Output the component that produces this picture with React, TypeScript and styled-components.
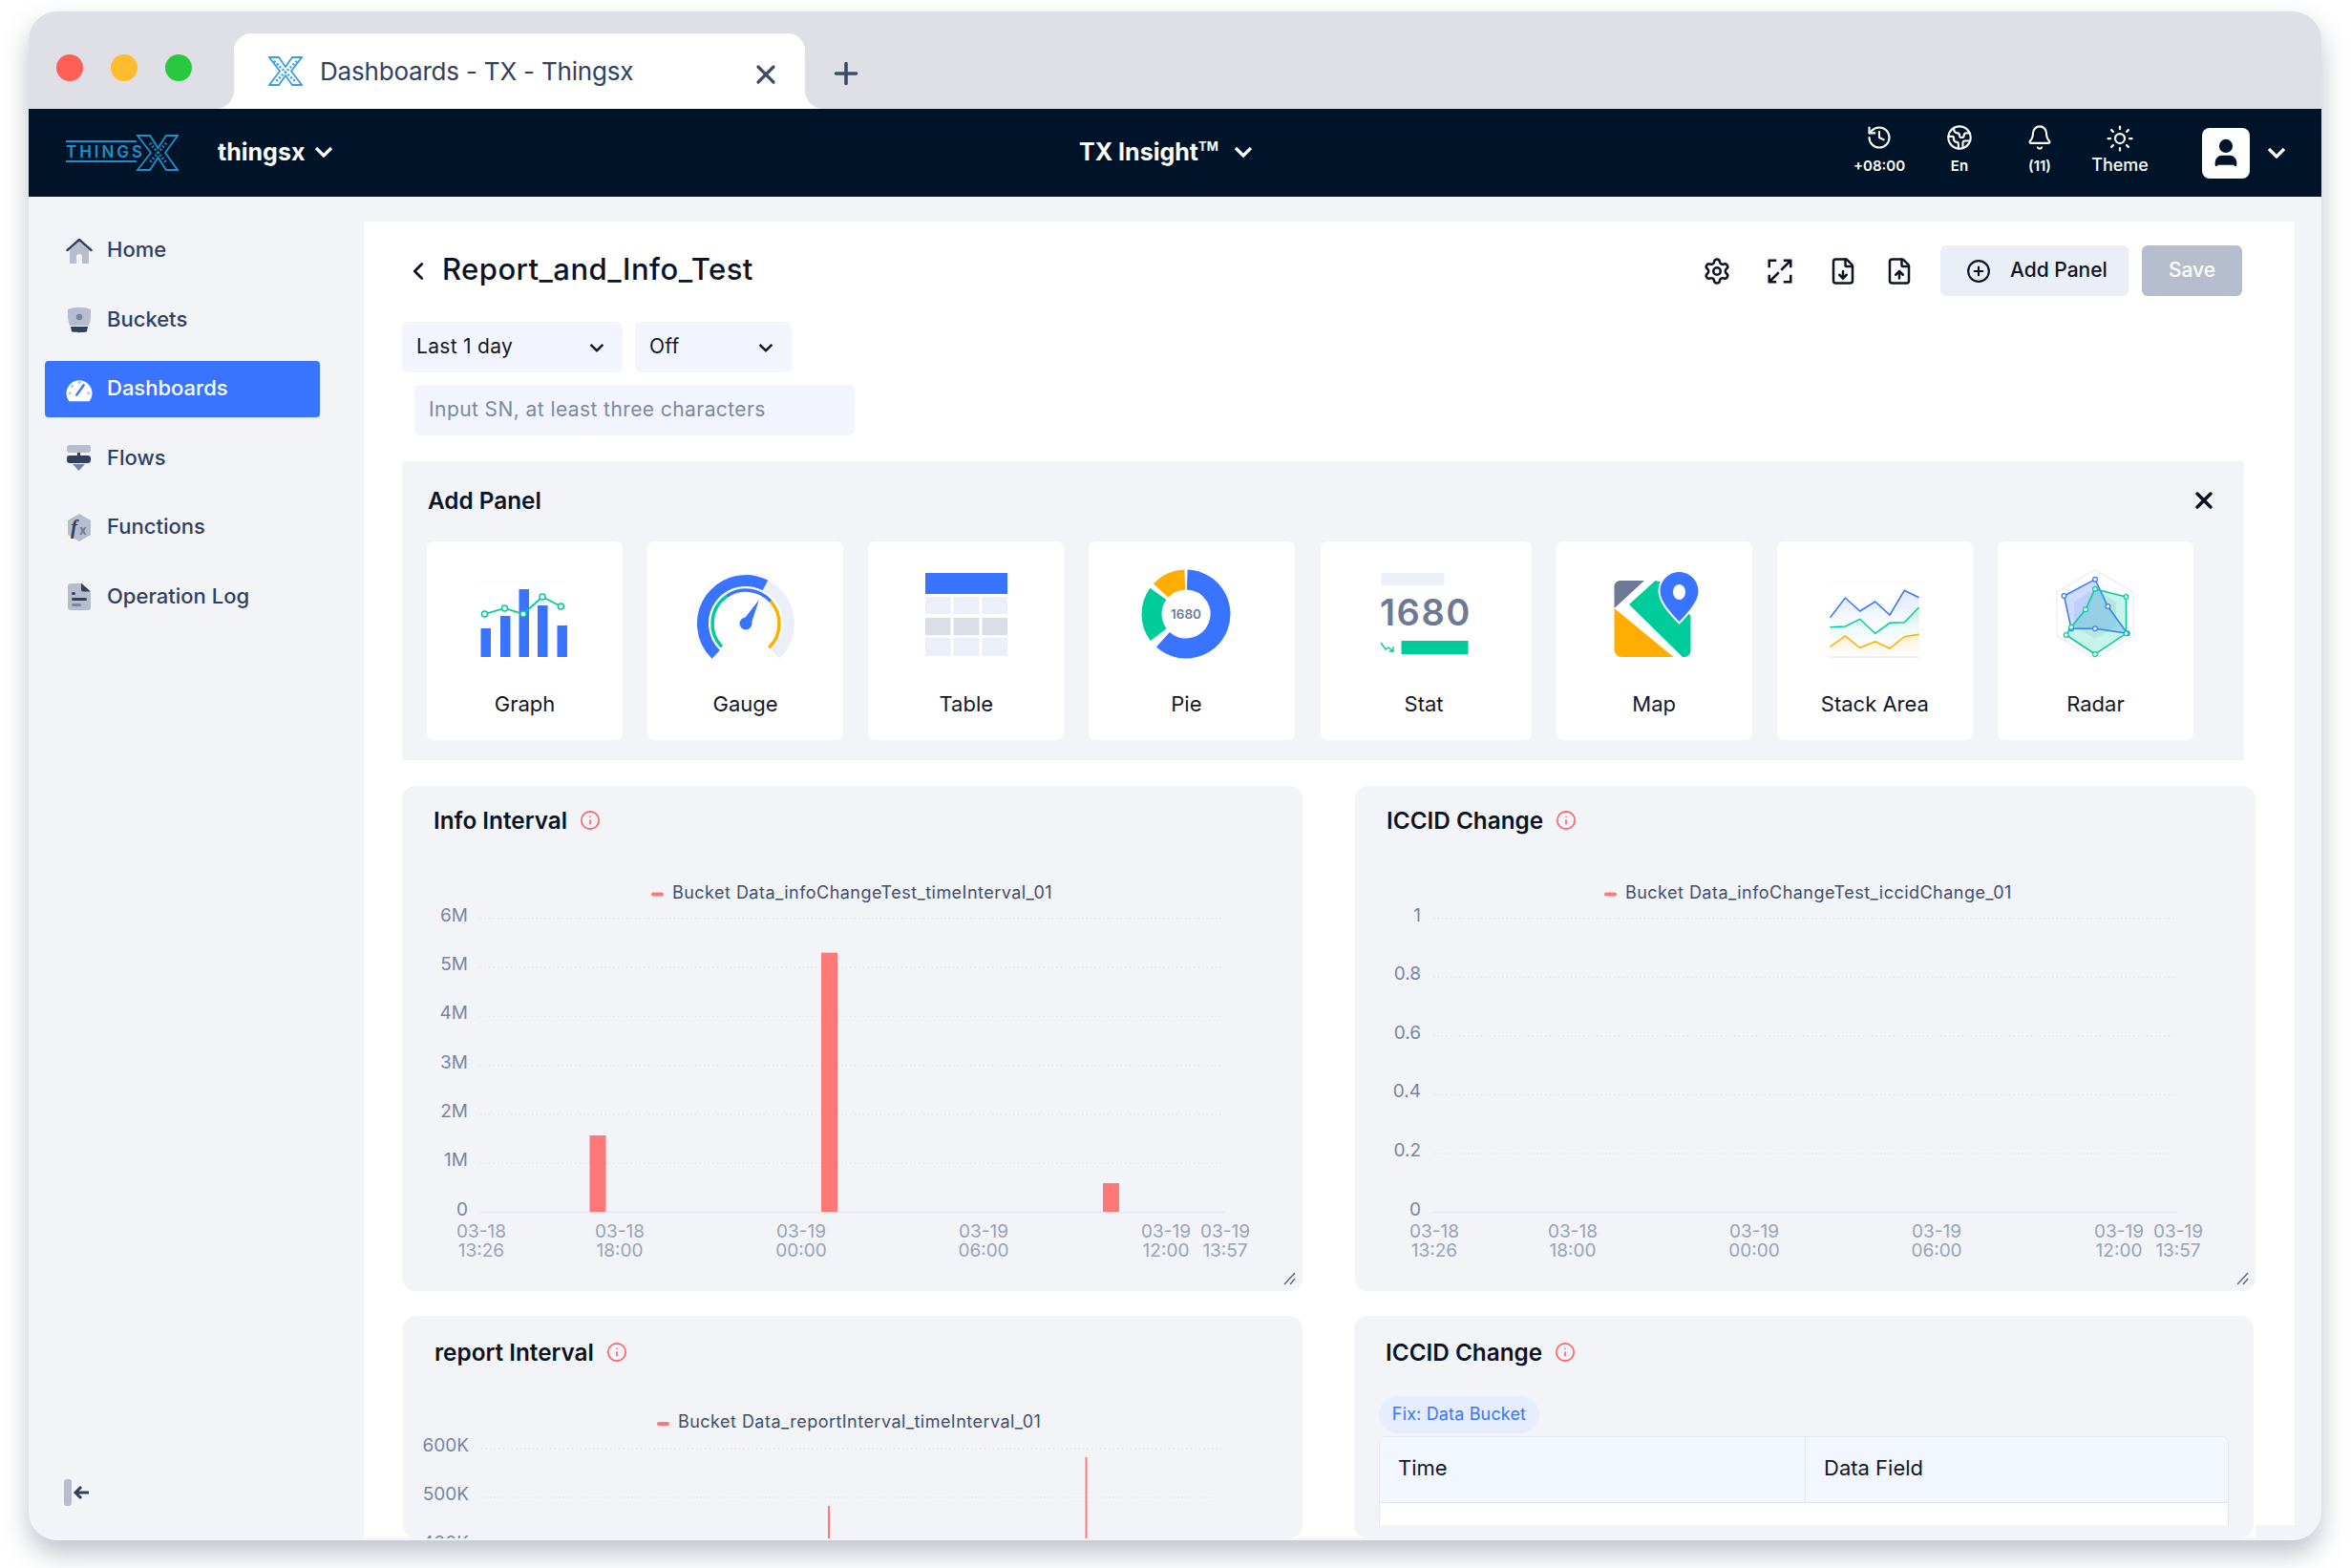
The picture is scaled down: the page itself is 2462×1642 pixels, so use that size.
import React from "react";
import styled, { createGlobalStyle } from "styled-components";
import {
  Bell,
  ChevronLeft,
  CirclePlus,
  Earth,
  FileDown,
  FileUp,
  History,
  Info,
  Plus,
  Settings,
  Sun,
  User,
  X,
} from "lucide-react";

const BLUE = "#3874ff";
const GREEN = "#00cc9b";
const ORANGE = "#ffae00";
const SOFT = "#ebeff8";
const INK = "#31405f";
const MUTED = "#b6bdcc";
const FONT = `Inter, "Noto Sans", sans-serif`;

const GlobalStyle = createGlobalStyle`
  html, body {
    margin: 0;
    background: #ffffff;
    font-family: ${FONT};
  }
  * { box-sizing: border-box; }
`;

const Page = styled.div`
  width: 2462px;
  height: 1642px;
  padding: 12px 0 0 30px;
  overflow: hidden;
`;

const Window = styled.div`
  width: 2401px;
  height: 1601px;
  border-radius: 30px;
  background: #f2f4f8;
  box-shadow: 0 14px 28px rgba(70, 85, 105, 0.35);
  overflow: hidden;
  display: flex;
  flex-direction: column;
`;

const TabBar = styled.div`
  height: 102px;
  flex: none;
  background: #dfe0e5;
  display: flex;
  align-items: flex-end;
  padding-left: 29px;
`;

const Lights = styled.div`
  display: flex;
  gap: 29px;
  margin-bottom: 29px;
`;

const Light = styled.span<{ $color: string }>`
  width: 28px;
  height: 28px;
  border-radius: 50%;
  background: ${({ $color }) => $color};
`;

const Tab = styled.div`
  position: relative;
  width: 598px;
  height: 79px;
  margin-left: 44px;
  padding: 0 25px 0 36px;
  display: flex;
  align-items: center;
  gap: 18px;
  background: #ffffff;
  border-radius: 18px 18px 0 0;
  color: ${INK};

  &::before,
  &::after {
    content: "";
    position: absolute;
    bottom: 0;
    width: 20px;
    height: 20px;
  }
  &::before {
    left: -20px;
    background: radial-gradient(circle at 0 0, transparent 20px, #ffffff 20.5px);
  }
  &::after {
    right: -20px;
    background: radial-gradient(circle at 100% 0, transparent 20px, #ffffff 20.5px);
  }
`;

const TabTitle = styled.span`
  flex: 1;
  font-size: 26px;
  letter-spacing: -0.2px;
  white-space: nowrap;
`;

const NewTab = styled.div`
  margin: 0 0 21px 27px;
  width: 32px;
  height: 32px;
  color: #3d4b69;
`;

const Header = styled.header`
  height: 92px;
  flex: none;
  background: #001429;
  color: #ffffff;
  display: flex;
  align-items: center;
`;

const HeaderLeft = styled.div`
  width: 1100px;
  padding-left: 39px;
  display: flex;
  align-items: center;
  gap: 41px;
`;

const Org = styled.div`
  display: flex;
  align-items: center;
  gap: 10px;
  padding-bottom: 2px;
  font-size: 25px;
  font-weight: 700;
`;

const Product = styled.div`
  display: flex;
  align-items: center;
  gap: 16px;
  padding-bottom: 2px;
  font-size: 25px;
  font-weight: 700;
  sup {
    font-size: 13px;
    line-height: 0;
    vertical-align: 10px;
  }
`;

const Caret = styled.svg.attrs({ viewBox: "0 0 20 12", width: 20, height: 12 })`
  flex: none;
  fill: none;
  stroke: currentColor;
  stroke-width: 3.2;
`;

const HeaderRight = styled.div`
  margin-left: auto;
  padding-right: 37px;
  display: flex;
  align-items: center;
`;

const Tools = styled.div`
  display: flex;
  gap: 24px;
`;

const Tool = styled.div`
  width: 60px;
  height: 56px;
  display: flex;
  flex-direction: column;
  align-items: center;
  justify-content: space-between;
  svg {
    margin-top: -2px;
  }
`;

const ToolLabel = styled.span<{ $big?: boolean }>`
  font-size: ${({ $big }) => ($big ? "18px" : "15px")};
  font-weight: ${({ $big }) => ($big ? 500 : 600)};
  line-height: ${({ $big }) => ($big ? "24px" : "20px")};
  margin-bottom: ${({ $big }) => ($big ? "3px" : "4px")};
  white-space: nowrap;
`;

const Avatar = styled.div`
  width: 50px;
  height: 53px;
  margin: 0 18px 0 56px;
  border-radius: 8px;
  background: #ffffff;
  color: #001429;
  display: flex;
  align-items: center;
  justify-content: center;
`;

const Body = styled.div`
  flex: 1;
  min-height: 0;
  display: flex;
`;

const Sidebar = styled.nav`
  width: 351px;
  flex: none;
  padding: 27px 0 36px 17px;
  display: flex;
  flex-direction: column;
  gap: 13.6px;
`;

const NavItem = styled.div<{ $active?: boolean }>`
  width: 288px;
  height: 59px;
  flex: none;
  padding-left: 22px;
  display: flex;
  align-items: center;
  gap: 15px;
  border-radius: 4px;
  font-size: 22px;
  font-weight: 500;
  background: ${({ $active }) => ($active ? BLUE : "transparent")};
  color: ${({ $active }) => ($active ? "#ffffff" : INK)};
`;

const NavLabel = styled.span`
  padding-bottom: 3px;
`;

const Collapse = styled.div`
  margin: auto 0 0 20px;
  width: 30px;
  height: 28px;
`;

const Main = styled.main`
  position: relative;
  width: 2022px;
  height: 1379px;
  margin-top: 26px;
  padding: 25px 0 0 40px;
  background: #ffffff;
  overflow: hidden;
`;

const CornerMask = styled.div`
  position: absolute;
  right: 0;
  bottom: 0;
  width: 41px;
  height: 14px;
  background: #f2f4f8;
`;

const TitleRow = styled.div`
  width: 1927px;
  height: 53px;
  padding-left: 2px;
  display: flex;
  align-items: center;
  color: #0b1324;
`;

const PageTitle = styled.h1`
  margin: 0 auto 5px 10px;
  font-size: 31px;
  font-weight: 500;
  letter-spacing: 0.45px;
`;

const IconSlot = styled.div<{ $gap: number }>`
  margin-right: ${({ $gap }) => $gap}px;
  width: 32px;
  height: 32px;
  display: flex;
  align-items: center;
  justify-content: center;
`;

const AddButton = styled.div`
  width: 197px;
  height: 53px;
  padding: 0 0 2px 27px;
  display: flex;
  align-items: center;
  gap: 20px;
  border-radius: 6px;
  background: #e9eef7;
  font-size: 21px;
  font-weight: 500;
  white-space: nowrap;
  svg {
    margin-top: 2px;
  }
`;

const SaveButton = styled.div`
  width: 105px;
  height: 53px;
  margin-left: 14px;
  padding-bottom: 2px;
  display: flex;
  align-items: center;
  justify-content: center;
  border-radius: 6px;
  background: #b6bdcc;
  color: #ffffff;
  font-size: 21px;
  font-weight: 500;
`;

const Filters = styled.div`
  margin-top: 27px;
  display: flex;
  gap: 13px;
`;

const Select = styled.div<{ $width: number }>`
  width: ${({ $width }) => $width}px;
  height: 53px;
  padding: 0 17px 2px 15px;
  display: flex;
  align-items: center;
  justify-content: space-between;
  border-radius: 6px;
  background: #f2f5fd;
  color: #141824;
  font-size: 21px;
  letter-spacing: 0.3px;
  ${Caret} {
    margin-top: 2px;
    stroke-width: 3;
    transform: scale(0.8);
  }
`;

const SnInput = styled.input`
  display: block;
  width: 461px;
  height: 53px;
  margin: 13px 0 0 13px;
  padding: 0 15px 2px;
  border: 0;
  border-radius: 6px;
  background: #f2f5fd;
  font-family: ${FONT};
  font-size: 21px;
  letter-spacing: 0.42px;
  &::placeholder {
    color: #7b88a3;
    opacity: 1;
  }
`;

const AddPanel = styled.section`
  width: 1929px;
  height: 313px;
  margin-top: 27px;
  background: #f2f4f8;
  padding-left: 26px;
`;

const AddPanelHead = styled.div`
  height: 84px;
  padding: 0 28px 3px 1px;
  display: flex;
  align-items: center;
  justify-content: space-between;
  color: #0b1324;
`;

const PanelTitle = styled.h2`
  margin: 0;
  font-size: 24.3px;
  font-weight: 600;
  color: #0b1324;
  white-space: nowrap;
`;

const TypeList = styled.div`
  display: flex;
  gap: 26.15px;
`;

const TypeCard = styled.div<{ $width: number; $inset: number }>`
  width: ${({ $width }) => $width}px;
  height: 208px;
  padding: 23px ${({ $inset }) => $inset}px 0 0;
  display: flex;
  flex-direction: column;
  align-items: center;
  border-radius: 8px;
  background: #ffffff;
`;

const TypeLabel = styled.span`
  margin-top: 22px;
  font-size: 22px;
  line-height: 30px;
  color: #141824;
`;

const TypeArt = styled.svg.attrs({ viewBox: "0 0 120 110", width: 120, height: 110 })`
  flex: none;
  display: block;
`;

const ChartGrid = styled.div<{ $inset?: boolean }>`
  display: grid;
  grid-template-columns: ${({ $inset }) => ($inset ? "942px 942px" : "943px 943px")};
  column-gap: ${({ $inset }) => ($inset ? "54px" : "55px")};
  margin: ${({ $inset }) => ($inset ? "26px 0 0 1px" : "27px 0 0")};
`;

const ChartCard = styled.section<{ $height: number }>`
  position: relative;
  height: ${({ $height }) => $height}px;
  border-radius: 14px;
  background: #f2f4f8;
  overflow: hidden;
`;

const ChartHead = styled.div<{ $top: number }>`
  height: 70px;
  padding: ${({ $top }) => $top}px 0 0 33px;
  display: flex;
  align-items: center;
  gap: 13px;
`;

const ChartArt = styled.svg`
  display: block;
`;

const AxisText = styled.text<{ $tone?: "y" | "x" | "legend" }>`
  font-family: ${FONT};
  font-size: ${({ $tone }) => ($tone === "legend" ? "18px" : "19px")};
  letter-spacing: ${({ $tone }) => ($tone === "legend" ? "0.47px" : "0")};
  fill: ${({ $tone }) =>
    $tone === "legend" ? "#3f4d6b" : $tone === "x" ? "#98a2b8" : "#7785a2"};
`;

const Handle = styled.svg`
  position: absolute;
  right: 7px;
  bottom: 6px;
`;

const FixTag = styled.div`
  width: 168px;
  height: 39px;
  margin: 14px 0 3px 26px;
  padding-bottom: 2px;
  display: flex;
  align-items: center;
  justify-content: center;
  border-radius: 20px;
  background: #e5edff;
  color: ${BLUE};
  font-size: 18px;
  letter-spacing: 0.15px;
  white-space: nowrap;
`;

const DataTable = styled.div`
  width: 890px;
  height: 93px;
  margin-left: 26px;
  border: 1px solid #e3e6ed;
  border-bottom: 0;
  border-radius: 6px 6px 0 0;
  background: #ffffff;
  overflow: hidden;
`;

const TableHead = styled.div`
  height: 69px;
  display: grid;
  grid-template-columns: 445px 1fr;
  background: #f2f6fe;
  border-bottom: 1px solid #e3e6ed;
`;

const TableCell = styled.div`
  padding: 0 0 4px 19px;
  display: flex;
  align-items: center;
  font-size: 22px;
  color: #141824;
  & + & {
    border-left: 1px solid #e3e6ed;
  }
`;

const polar = (cx: number, cy: number, r: number, deg: number) => {
  const a = (deg * Math.PI) / 180;
  return `${(cx + r * Math.sin(a)).toFixed(2)} ${(cy - r * Math.cos(a)).toFixed(2)}`;
};

const arc = (cx: number, cy: number, r: number, from: number, to: number) =>
  `M${polar(cx, cy, r, from)} A${r} ${r} 0 ${to - from > 180 ? 1 : 0} 1 ${polar(cx, cy, r, to)}`;

function Chevron() {
  return (
    <Caret>
      <path d="M2 2 10 10 18 2" />
    </Caret>
  );
}

function LogoMark() {
  return (
    <svg width="118" height="38" viewBox="0 0 118 38">
      <g stroke="#1d8fc9" fill="none" strokeWidth="1.8">
        <path d="M0 7H74M0 28H74" />
        <path d="M75 1H88L96.5 14 105 1H117L104 19 117 37H105L96.5 24 88 37H75L89 19Z" />
        <path d="M88 9 105 29M105 9 88 29" strokeDasharray="1.5 2.5" strokeWidth="3" />
      </g>
      <text x="0" y="24" fontFamily={FONT} fontSize="17" fontWeight="600" fill="#1d8fc9" textLength="80">
        THINGS
      </text>
    </svg>
  );
}

function TabLogo() {
  return (
    <svg width="36" height="31" viewBox="0 0 36 31" style={{ flex: "none" }}>
      <g stroke="#3a9fdc" fill="none" strokeWidth="1.8">
        <path d="M1 1H11L18 11 25 1H35L24 15.5 35 30H25L18 20 11 30H1L12 15.5Z" />
        <path d="M6 5 29 27M30 5 7 27" strokeDasharray="2 2" strokeWidth="2.5" />
      </g>
    </svg>
  );
}

const NavIcons: Record<string, React.ReactNode> = {
  Home: (
    <svg width="28" height="28" viewBox="0 0 28 28">
      <path d="M4 13 14 4 24 13V26a1 1 0 0 1-1 1H17V20a3 3 0 0 0-6 0V27H5a1 1 0 0 1-1-1Z" fill={MUTED} />
      <path d="M1.5 13 14 2 26.5 13" fill="none" stroke={INK} strokeWidth="2.4" strokeLinecap="round" strokeLinejoin="round" />
    </svg>
  ),
  Buckets: (
    <svg width="28" height="28" viewBox="0 0 28 28">
      <path d="M2 3C9 0 19 0 26 3V10C26 14 25 17 24 20H4C3 17 2 14 2 10Z" fill={MUTED} />
      <circle cx="14" cy="11" r="3.2" fill="#7985a0" />
      <path d="M5 21H23L22 26C22 27.5 6 27.5 6 26Z" fill={INK} />
    </svg>
  ),
  Dashboards: (
    <svg width="28" height="28" viewBox="0 0 30 28">
      <path d="M3.5 27A14.5 14.5 0 1 1 26.5 27Z" fill="#ffffff" />
      <g fill="#b5ccff">
        <circle cx="15" cy="6" r="1.8" />
        <circle cx="7" cy="10" r="1.8" />
        <circle cx="4.5" cy="18" r="1.8" />
        <circle cx="25.5" cy="18" r="1.8" />
      </g>
      <path d="M12 20 20 9" stroke={BLUE} strokeWidth="2.6" strokeLinecap="round" />
    </svg>
  ),
  Flows: (
    <svg width="28" height="28" viewBox="0 0 28 28">
      <rect x="1" y="0" width="25" height="8" rx="3" fill={MUTED} />
      <rect x="1" y="11" width="25" height="8" rx="3" fill={INK} />
      <rect x="12" y="8" width="3" height="4" fill={INK} />
      <path d="M7 20H20L13.5 27Z" fill="#7985a0" />
    </svg>
  ),
  Functions: (
    <svg width="28" height="30" viewBox="0 0 28 30">
      <path d="M14 0 26 7V22L14 29 2 22V7Z" fill={MUTED} />
      <text x="5" y="21" fontFamily="'Liberation Serif', serif" fontStyle="italic" fontWeight="700" fontSize="21" fill={INK}>
        f
      </text>
      <text x="14" y="22" fontFamily={FONT} fontWeight="700" fontSize="13" fill="#6c7893">
        x
      </text>
    </svg>
  ),
  "Operation Log": (
    <svg width="28" height="30" viewBox="0 0 28 30">
      <path d="M5 1H16L26 11V26a3 3 0 0 1-3 3H5a3 3 0 0 1-3-3V4a3 3 0 0 1 3-3Z" fill={MUTED} />
      <path d="M16 0.5 26 9.5H18a2 2 0 0 1-2-2Z" fill={INK} />
      <rect x="6" y="10" width="4" height="3" rx="1.5" fill={INK} />
      <rect x="6" y="16" width="16" height="3" rx="1.5" fill={INK} />
      <rect x="6" y="22" width="10" height="3" rx="1.5" fill="#7985a0" />
    </svg>
  ),
};

const navItems = ["Home", "Buckets", "Dashboards", "Flows", "Functions", "Operation Log"];

function GraphArt() {
  const bars = [
    [13.5, 68],
    [34, 55],
    [53.5, 27],
    [73, 44],
    [93.5, 65],
  ];
  const pts = [
    [17.5, 53],
    [38.5, 47],
    [58, 53],
    [78, 35],
    [97.5, 45],
  ];
  return (
    <TypeArt>
      <path d="M13 20H104" stroke={SOFT} strokeDasharray="1.5 2.5" />
      {bars.map(([x, y]) => (
        <rect key={x} x={x} y={y} width="10.5" height={98 - y} fill={BLUE} />
      ))}
      <polyline points={pts.map((p) => p.join(",")).join(" ")} fill="none" stroke={GREEN} strokeWidth="1.8" />
      {pts.map(([x, y]) => (
        <circle key={x} cx={x} cy={y} r="3" fill="#ffffff" stroke={GREEN} strokeWidth="1.5" />
      ))}
    </TypeArt>
  );
}

function GaugeArt() {
  return (
    <TypeArt>
      <g fill="none">
        <path d={arc(60, 63, 45, 27, 136)} stroke={SOFT} strokeWidth="12" />
        <path d={arc(60, 63, 45, 224, 387)} stroke={BLUE} strokeWidth="12" />
        <path d={arc(60, 63, 35, 226, 325)} stroke={GREEN} strokeWidth="3.5" />
        <path d={arc(60, 63, 35, 325, 408)} stroke={BLUE} strokeWidth="3.5" />
        <path d={arc(60, 63, 35, 48, 136)} stroke={ORANGE} strokeWidth="3.5" />
      </g>
      <path d="M56 61 74 38 65 65Z" fill={BLUE} />
      <circle cx="60" cy="63" r="6.5" fill={BLUE} />
    </TypeArt>
  );
}

function TableArt() {
  const cols = [
    [17, 26.5],
    [46.5, 27],
    [76.5, 26.5],
  ];
  const rows = [
    [35, 18, SOFT],
    [57, 18, "#d9dee7"],
    [78, 19, SOFT],
  ] as const;
  return (
    <TypeArt>
      <rect x="17" y="10" width="86" height="22" fill={BLUE} />
      {rows.map(([y, h, fill]) =>
        cols.map(([x, w]) => <rect key={`${x}-${y}`} x={x} y={y} width={w} height={h} fill={fill} />)
      )}
    </TypeArt>
  );
}

function PieArt() {
  return (
    <TypeArt>
      <g fill="none" strokeWidth="21">
        <path d={arc(60, 53, 36, 2, 222)} stroke={BLUE} />
        <path d={arc(60, 53, 36, 233, 306)} stroke={GREEN} />
        <path d={arc(60, 53, 36, 313, 358)} stroke={ORANGE} />
      </g>
      <text x="60" y="58" textAnchor="middle" fontFamily={FONT} fontWeight="600" fontSize="13.5" fill="#6e7a95">
        1680
      </text>
    </TypeArt>
  );
}

function StatArt() {
  return (
    <TypeArt>
      <rect x="15.5" y="10" width="66" height="13" fill={SOFT} />
      <text x="14" y="65" fontFamily={FONT} fontWeight="600" fontSize="38" letterSpacing="1.5" fill="#6e7a95">
        1680
      </text>
      <rect x="36.5" y="81" width="70" height="14" fill={GREEN} />
      <path d="M15 83 20 90 23 88 28 92M28 87V92H24" fill="none" stroke={GREEN} strokeWidth="1.4" />
    </TypeArt>
  );
}

function MapArt() {
  return (
    <TypeArt>
      <path d="M18.5 47V24a6 6 0 0 1 6-6H50Z" fill="#6e7a95" />
      <path d="M18.5 47 80.5 98H26a7.5 7.5 0 0 1-7.5-7.5Z" fill={ORANGE} />
      <path d="M61.5 18 34 43 90 98H92a6.5 6.5 0 0 0 6.5-6.5V55L70 20Z" fill={GREEN} />
      <path
        d="M86.5 9C75.5 9 66.5 18 66.5 29C66.5 40 78 52 86.5 61C95 52 106.5 40 106.5 29C106.5 18 97.5 9 86.5 9Z"
        fill={BLUE}
        stroke="#ffffff"
        strokeWidth="4"
        paintOrder="stroke"
      />
      <ellipse cx="86.5" cy="30" rx="6.5" ry="8" fill="#ffffff" />
    </TypeArt>
  );
}

function StackArt() {
  const xs = [13.5, 29.4, 44.7, 60.7, 76, 91.3, 106.6];
  const series = [
    { id: "a", color: BLUE, ys: [56.7, 36, 50, 40, 54, 28.3, 35.7], bottom: 68 },
    { id: "b", color: GREEN, ys: [66.7, 66, 58.3, 73.3, 62.3, 61.7, 46], bottom: 85 },
    { id: "c", color: ORANGE, ys: [87.3, 76, 88.3, 81.7, 89, 76.7, 74.3], bottom: 98.5 },
  ];
  return (
    <TypeArt>
      <defs>
        {series.map((s) => (
          <linearGradient key={s.id} id={`stack-${s.id}`} x1="0" y1="0" x2="0" y2="1">
            <stop offset="0" stopColor={s.color} stopOpacity="0.16" />
            <stop offset="1" stopColor={s.color} stopOpacity="0" />
          </linearGradient>
        ))}
      </defs>
      <path d="M13.5 20H106.5M13.5 47H106.5M13.5 73H106.5" stroke={SOFT} strokeDasharray="1.5 2.5" />
      {series.map((s) => {
        const line = s.ys.map((y, i) => `${xs[i]},${y}`).join(" ");
        return (
          <g key={s.id}>
            <polygon points={`13.5,${s.bottom} ${line} 106.6,${s.bottom}`} fill={`url(#stack-${s.id})`} />
            <polyline points={line} fill="none" stroke={s.color} strokeWidth="1.5" />
          </g>
        );
      })}
      <rect x="13.5" y="97" width="93" height="2" fill={SOFT} />
    </TypeArt>
  );
}

function RadarArt() {
  const blue = [
    [60, 16.7],
    [73.4, 45],
    [93.7, 73.3],
    [60, 68.3],
    [35, 68.3],
    [27.5, 34],
  ];
  const green = [
    [60, 26.7],
    [92.5, 35],
    [92.5, 73.3],
    [60, 95],
    [29.7, 75],
    [35, 66.7],
    [50, 48.3],
  ];
  const toPts = (list: number[][]) => list.map((p) => p.join(",")).join(" ");
  return (
    <TypeArt>
      <polygon points="60,6.7 100,30 100,76 60,100 20,76 20,30" fill="#ffffff" stroke={SOFT} strokeWidth="1.5" />
      <polygon points="60,27 82,40 82,66 60,79 38,66 38,40" fill={SOFT} />
      <polygon points={toPts(blue)} fill={BLUE} fillOpacity="0.25" stroke={BLUE} strokeWidth="1.5" />
      <polygon points={toPts(green)} fill={GREEN} fillOpacity="0.22" stroke={GREEN} strokeWidth="1.5" />
      {blue.map(([x, y]) => (
        <circle key={`b${x}${y}`} cx={x} cy={y} r="2.4" fill="#ffffff" stroke={BLUE} strokeWidth="1.2" />
      ))}
      {green.map(([x, y]) => (
        <circle key={`g${x}${y}`} cx={x} cy={y} r="2.4" fill="#ffffff" stroke={GREEN} strokeWidth="1.2" />
      ))}
    </TypeArt>
  );
}

const panelTypes = [
  { label: "Graph", width: 205, inset: 0, art: <GraphArt /> },
  { label: "Gauge", width: 205, inset: 0, art: <GaugeArt /> },
  { label: "Table", width: 205, inset: 0, art: <TableArt /> },
  { label: "Pie", width: 216, inset: 12, art: <PieArt /> },
  { label: "Stat", width: 221, inset: 4, art: <StatArt /> },
  { label: "Map", width: 205, inset: 0, art: <MapArt /> },
  { label: "Stack Area", width: 205, inset: 0, art: <StackArt /> },
  { label: "Radar", width: 205, inset: 0, art: <RadarArt /> },
];

interface ChartProps {
  height: number;
  labels: string[];
  gridTop: number;
  gridStep: number;
  gridRight: number;
  baseline?: boolean;
  legend: string;
  legendX: number;
  legendY: number;
  xTicks?: [number, string, string][];
  bars: { x: number; top: number; width: number }[];
  barBottom: number;
}

const timeTicks: [number, string, string][] = [
  [83, "03-18", "13:26"],
  [228, "03-18", "18:00"],
  [418, "03-19", "00:00"],
  [609, "03-19", "06:00"],
  [800, "03-19", "12:00"],
  [862, "03-19", "13:57"],
];

function Chart({ height, labels, gridTop, gridStep, gridRight, baseline, legend, legendX, legendY, xTicks, bars, barBottom }: ChartProps) {
  return (
    <ChartArt width="942" height={height} viewBox={`0 0 942 ${height}`}>
      <rect x={legendX - 22} y={legendY - 6} width="13" height="4" rx="2" fill="#ff7878" />
      <AxisText $tone="legend" x={legendX} y={legendY}>
        {legend}
      </AxisText>
      {labels.map((label, i) => {
        const y = gridTop + i * gridStep;
        const isBase = baseline && i === labels.length - 1;
        return (
          <g key={label}>
            <line
              x1="82"
              x2={gridRight}
              y1={y}
              y2={y}
              stroke={isBase ? "#e6e9f2" : "#e1e5ee"}
              strokeWidth={isBase ? 2 : 1.5}
              strokeDasharray={isBase ? undefined : "1.5 3"}
            />
            <AxisText $tone="y" x="69" y={y + 3} textAnchor="end">
              {label}
            </AxisText>
          </g>
        );
      })}
      {bars.map((b) => (
        <rect key={b.x} x={b.x} y={b.top} width={b.width} height={barBottom - b.top} fill="#ff7878" />
      ))}
      {xTicks?.map(([x, date, time]) => (
        <g key={x}>
          <AxisText $tone="x" x={x} y="403" textAnchor="middle">
            {date}
          </AxisText>
          <AxisText $tone="x" x={x} y="423" textAnchor="middle">
            {time}
          </AxisText>
        </g>
      ))}
    </ChartArt>
  );
}

function ResizeHandle() {
  return (
    <Handle width="13" height="14" viewBox="0 0 13 14">
      <path d="M1 13 12 1M7 13 12 7" stroke="#5a6b90" strokeWidth="1.5" fill="none" />
    </Handle>
  );
}

function PanelTitleRow({ title, top }: { title: string; top: number }) {
  return (
    <ChartHead $top={top}>
      <PanelTitle>{title}</PanelTitle>
      <Info size={22} color="#ff5f5f" strokeWidth={1.8} />
    </ChartHead>
  );
}

export default function App() {
  return (
    <Page>
      <GlobalStyle />
      <Window>
        <TabBar>
          <Lights>
            <Light $color="#ff5f57" />
            <Light $color="#febc2e" />
            <Light $color="#28c840" />
          </Lights>
          <Tab>
            <TabLogo />
            <TabTitle>Dashboards - TX - Thingsx</TabTitle>
            <X size={32} color="#3d4b69" strokeWidth={2.4} style={{ marginTop: 6 }} />
          </Tab>
          <NewTab>
            <Plus size={36} strokeWidth={2.4} style={{ margin: -2 }} />
          </NewTab>
        </TabBar>

        <Header>
          <HeaderLeft>
            <LogoMark />
            <Org>
              thingsx
              <Chevron />
            </Org>
          </HeaderLeft>
          <Product>
            <span>
              TX Insight<sup>TM</sup>
            </span>
            <Chevron />
          </Product>
          <HeaderRight>
            <Tools>
              <Tool>
                <History size={28} strokeWidth={1.8} />
                <ToolLabel>+08:00</ToolLabel>
              </Tool>
              <Tool>
                <Earth size={28} strokeWidth={1.8} />
                <ToolLabel>En</ToolLabel>
              </Tool>
              <Tool>
                <Bell size={28} strokeWidth={1.8} />
                <ToolLabel>(11)</ToolLabel>
              </Tool>
              <Tool>
                <Sun size={30} strokeWidth={1.8} />
                <ToolLabel $big>Theme</ToolLabel>
              </Tool>
            </Tools>
            <Avatar>
              <User size={34} fill="#001429" strokeWidth={2} />
            </Avatar>
            <Chevron />
          </HeaderRight>
        </Header>

        <Body>
          <Sidebar>
            {navItems.map((name) => (
              <NavItem key={name} $active={name === "Dashboards"}>
                {NavIcons[name]}
                <NavLabel>{name}</NavLabel>
              </NavItem>
            ))}
            <Collapse>
              <svg width="30" height="28" viewBox="0 0 30 28">
                <rect x="0" y="0" width="8" height="28" rx="3" fill={MUTED} />
                <path d="M26 14H12M18 8 12 14 18 20" fill="none" stroke={INK} strokeWidth="3" />
              </svg>
            </Collapse>
          </Sidebar>

          <Main>
            <TitleRow>
              <ChevronLeft size={30} strokeWidth={2.2} />
              <PageTitle>Report_and_Info_Test</PageTitle>
              <IconSlot $gap={34}>
                <Settings size={30} strokeWidth={2} />
              </IconSlot>
              <IconSlot $gap={34}>
                <svg width="30" height="30" viewBox="0 0 24 24" fill="none" stroke="currentColor" strokeWidth="2">
                  <path d="M9 3H3v6M21 15v6h-6M15 3h6v6M21 3l-8 8M3 15v6h6M3 21l8-8" />
                </svg>
              </IconSlot>
              <IconSlot $gap={27}>
                <FileDown size={30} strokeWidth={2} />
              </IconSlot>
              <IconSlot $gap={27}>
                <FileUp size={30} strokeWidth={2} />
              </IconSlot>
              <AddButton>
                <CirclePlus size={26} strokeWidth={2} />
                Add Panel
              </AddButton>
              <SaveButton>Save</SaveButton>
            </TitleRow>

            <Filters>
              <Select $width={231}>
                Last 1 day
                <Chevron />
              </Select>
              <Select $width={164}>
                Off
                <Chevron />
              </Select>
            </Filters>
            <SnInput placeholder="Input SN, at least three characters" />

            <AddPanel>
              <AddPanelHead>
                <PanelTitle>Add Panel</PanelTitle>
                <X size={28} strokeWidth={3} />
              </AddPanelHead>
              <TypeList>
                {panelTypes.map((t) => (
                  <TypeCard key={t.label} $width={t.width} $inset={t.inset}>
                    {t.art}
                    <TypeLabel>{t.label}</TypeLabel>
                  </TypeCard>
                ))}
              </TypeList>
            </AddPanel>

            <ChartGrid>
              <ChartCard $height={529}>
                <PanelTitleRow title="Info Interval" top={2} />
                <Chart
                  height={459}
                  labels={["6M", "5M", "4M", "3M", "2M", "1M", "0"]}
                  gridTop={68.7}
                  gridStep={51.3}
                  gridRight={861}
                  baseline
                  legend="Bucket Data_infoChangeTest_timeInterval_01"
                  legendX={283}
                  legendY={47.5}
                  xTicks={timeTicks}
                  bars={[
                    { x: 196.5, top: 296, width: 17 },
                    { x: 439, top: 104.6, width: 17 },
                    { x: 734, top: 346, width: 17 },
                  ]}
                  barBottom={376}
                />
                <ResizeHandle />
              </ChartCard>
              <ChartCard $height={529}>
                <PanelTitleRow title="ICCID Change" top={2} />
                <Chart
                  height={459}
                  labels={["1", "0.8", "0.6", "0.4", "0.2", "0"]}
                  gridTop={68.7}
                  gridStep={61.56}
                  gridRight={861}
                  baseline
                  legend="Bucket Data_infoChangeTest_iccidChange_01"
                  legendX={283}
                  legendY={47.5}
                  xTicks={timeTicks}
                  bars={[]}
                  barBottom={376}
                />
                <ResizeHandle />
              </ChartCard>
            </ChartGrid>

            <ChartGrid $inset>
              <ChartCard $height={233}>
                <PanelTitleRow title="report Interval" top={6} />
                <Chart
                  height={163}
                  labels={["600K", "500K", "400K"]}
                  gridTop={69}
                  gridStep={51}
                  gridRight={857}
                  legend="Bucket Data_reportInterval_timeInterval_01"
                  legendX={288}
                  legendY={47}
                  bars={[
                    { x: 445, top: 129, width: 2 },
                    { x: 714.5, top: 78, width: 2 },
                  ]}
                  barBottom={163}
                />
              </ChartCard>
              <ChartCard $height={233}>
                <PanelTitleRow title="ICCID Change" top={6} />
                <FixTag>Fix: Data Bucket</FixTag>
                <DataTable>
                  <TableHead>
                    <TableCell>Time</TableCell>
                    <TableCell>Data Field</TableCell>
                  </TableHead>
                </DataTable>
              </ChartCard>
            </ChartGrid>
            <CornerMask />
          </Main>
        </Body>
      </Window>
    </Page>
  );
}
